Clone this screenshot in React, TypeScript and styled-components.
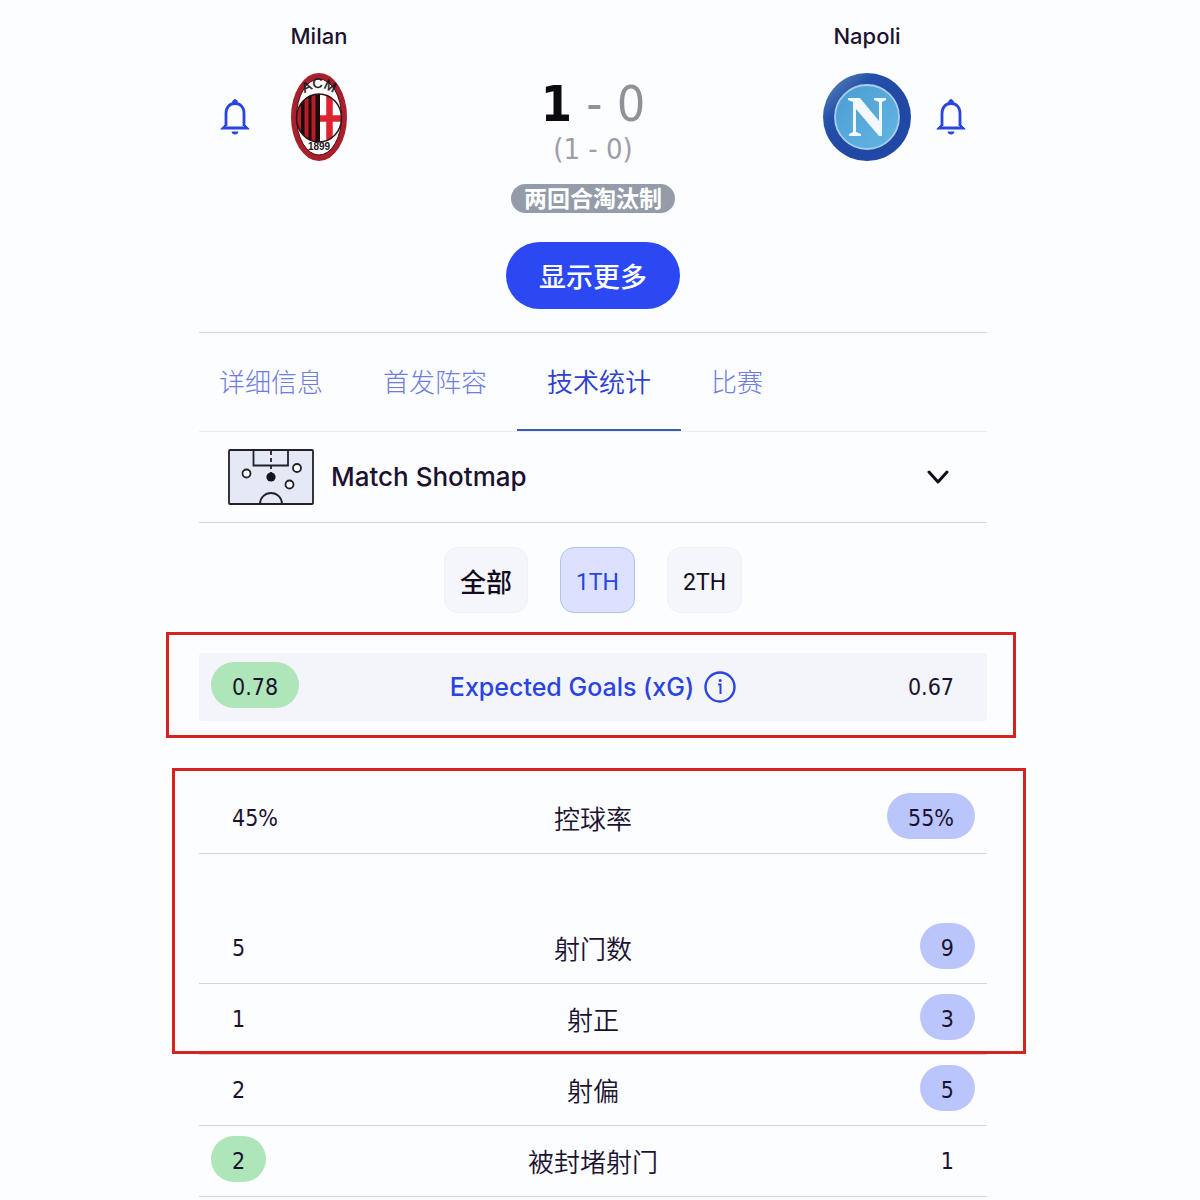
import React from "react";
import styled, { createGlobalStyle } from "styled-components";

const latin = `Inter, "Noto Sans CJK SC", sans-serif`;
const digits = `"DejaVu Sans Condensed", "DejaVu Sans", "Noto Sans CJK SC", sans-serif`;
const cjk = `"Noto Sans CJK SC", sans-serif`;

const ink = "#1b1230";
const blue = "#2a44e0";
const line = "#cfd8e2";

const GlobalStyle = createGlobalStyle`
  *, *::before, *::after { box-sizing: border-box; }
  body { margin: 0; background: #fcfdff; color: ${ink}; font-family: ${latin}; }
  button { margin: 0; padding: 0; border: 0; background: none; color: inherit; cursor: pointer; }
  svg { display: block; flex: none; }
`;

const Page = styled.main`
  padding: 24px 213px 0 199px;
`;

const Header = styled.header`
  display: flex;
  justify-content: space-between;
  align-items: flex-start;
  padding: 0 21px 23px;
  border-bottom: 1px solid ${line};
`;

const Team = styled.section<{ $away?: boolean }>`
  display: grid;
  grid-template-columns: ${(p) => (p.$away ? "88px 30px" : "30px 88px")};
  grid-template-areas: ${(p) => (p.$away ? `"name ." "crest bell"` : `". name" "bell crest"`)};
  gap: 25px;
  justify-items: center;
  align-items: center;
`;

const TeamName = styled.h2`
  grid-area: name;
  margin: 0;
  font: 500 22px/24px ${latin};
`;

const Crest = styled.div`
  grid-area: crest;
`;

const BellButton = styled.button`
  grid-area: bell;
`;

const Score = styled.section`
  display: flex;
  flex-direction: column;
  align-items: center;
  padding-top: 54px;
`;

const Total = styled.p`
  margin: 0;
  font: 400 50px/52px ${digits};
  color: #909297;
  white-space: pre;

  strong {
    font-weight: 700;
    color: #0d0b12;
  }
`;

const HalfTime = styled.p`
  margin: 0;
  padding-top: 2px;
  font: 400 29px/34px ${digits};
  color: #a09ba8;
`;

const Badge = styled.span`
  height: 29px;
  margin-top: 18px;
  padding: 0 13px;
  border-radius: 15px;
  background: #959ca9;
  color: #fff;
  font: 700 23px/26px ${cjk};
`;

const MoreButton = styled.button`
  && {
    height: 67px;
    margin-top: 29px;
    padding: 0 33px;
    border-radius: 34px;
    background: #2b48f2;
    color: #fff;
    font: 500 27px/64px ${cjk};
  }
`;

const Tabs = styled.nav`
  display: flex;
  border-bottom: 1px solid #e9eef3;
`;

const TabList = styled.div`
  display: flex;
  margin: 0 -10px;
`;

const Tab = styled.button<{ $active?: boolean }>`
  && {
    padding: 0 30px;
    border-bottom: 2px solid ${(p) => (p.$active ? "#3f5bb4" : "transparent")};
    color: ${(p) => (p.$active ? "#2f3fd0" : "#6f7ce0")};
    font: ${(p) => (p.$active ? 350 : 300)} 26px/96px ${cjk};
  }
`;

const ShotmapRow = styled.button`
  && {
    display: flex;
    align-items: center;
    gap: 17px;
    width: 100%;
    height: 91px;
    padding: 0 38px 0 29px;
    border-bottom: 1px solid ${line};
    font: 500 26px/32px ${latin};
  }

  span {
    flex: 1;
    text-align: left;
  }
`;

const Filters = styled.div`
  display: flex;
  justify-content: center;
  gap: 32px;
  padding: 24px 0 40px;
`;

const Filter = styled.button<{ $active?: boolean }>`
  && {
    height: 66px;
    padding: 5px 15px 0;
    border: 1px solid ${(p) => (p.$active ? "#b4c2ee" : "#eef1f7")};
    border-radius: 14px;
    background: ${(p) => (p.$active ? "#dbe1ff" : "#f5f6fb")};
    color: ${(p) => (p.$active ? blue : "#120c20")};
    font: 400 23px/32px Roboto, ${cjk};
  }
`;

const FilterCjk = styled.span`
  font: 500 26px/32px ${cjk};
`;

const Stats = styled.table`
  display: block;
`;

const Group = styled.tbody<{ $frame?: string; $apart?: boolean }>`
  display: block;
  position: relative;
  margin-top: ${(p) => (p.$apart ? "62px" : "0")};

  &::after {
    content: "";
    display: ${(p) => (p.$frame ? "block" : "none")};
    position: absolute;
    inset: ${(p) => p.$frame};
    border: 3px solid #d62320;
    pointer-events: none;
  }
`;

const Row = styled.tr<{ $shaded?: boolean; $spaced?: boolean }>`
  display: grid;
  grid-template-columns: 1fr auto 1fr;
  align-items: center;
  height: ${(p) => (p.$shaded ? "68px" : "71px")};
  margin-top: ${(p) => (p.$spaced ? "59px" : "0")};
  padding: ${(p) => (p.$shaded ? "0 12px 4px" : "0 12px 5px")};
  border-bottom: ${(p) => (p.$shaded ? "0" : `1px solid ${line}`)};
  border-radius: ${(p) => (p.$shaded ? "3px" : "0")};
  background: ${(p) => (p.$shaded ? "#f3f5fa" : "transparent")};
`;

const Cell = styled.td`
  padding: 0;

  &:last-child {
    text-align: right;
  }
`;

const Value = styled.span<{ $tone?: "green" | "blue" }>`
  display: inline-block;
  height: 46px;
  padding: 4px 21px 0;
  border-radius: 23px;
  background: ${(p) => (p.$tone === "green" ? "#aee5b9" : p.$tone === "blue" ? "#bac6fb" : "transparent")};
  font: 400 23px/42px ${digits};
  vertical-align: middle;
`;

const Label = styled.th<{ $link?: boolean }>`
  display: flex;
  align-items: center;
  gap: 10px;
  padding: 4px 0 0;
  color: ${(p) => (p.$link ? blue : ink)};
  font: ${(p) => (p.$link ? `500 25px/32px ${latin}` : `350 26px/36px ${cjk}`)};
`;

const InfoButton = styled.button``;

function Bell() {
  return (
    <svg width="30" height="38" viewBox="0 0 30 38" fill="none" stroke={blue}>
      <path d="M6 28V15.500C6 9.500 9.500 5.500 15 5.500s9 4 9 10V28" strokeWidth="2.800" />
      <path d="M12 5.500 13.200 2.500Q15 .5 16.800 2.500L18 5.500Z" fill={blue} strokeWidth="1" />
      <path d="M5.500 26.500 .8 31H29.200L24.500 26.500V29H5.500Z" fill={blue} strokeWidth="1" strokeLinejoin="round" />
      <path d="M11.500 33.500h7q-.5 3-3.500 3t-3.500-3Z" fill={blue} stroke="none" />
    </svg>
  );
}

function MilanCrest() {
  return (
    <svg width="56" height="88" viewBox="0 0 56 88" role="img" aria-label="Milan">
      <defs>
        <clipPath id="milan-shield">
          <ellipse cx="28" cy="45" rx="22.500" ry="24" />
        </clipPath>
        <path id="milan-arc" d="M7 26Q28 4 49 26" />
      </defs>
      <ellipse cx="28" cy="44" rx="28" ry="44" fill="#a8202b" />
      <ellipse cx="28" cy="44" rx="22.500" ry="38" fill="#fff" stroke="#4d1016" strokeWidth="1" />
      <g clipPath="url(#milan-shield)">
        <rect x="4" y="20" width="25" height="50" fill="#1a080b" />
        <path d="M8 20v50M15.500 20v50M22.500 20v50" stroke="#b51d27" strokeWidth="4" />
        <rect x="29" y="20" width="24" height="50" fill="#fff" />
        <path d="M38.500 20v50M29 45.500h24" stroke="#dc2430" strokeWidth="6.500" />
      </g>
      <ellipse cx="28" cy="45" rx="22.500" ry="24" fill="none" stroke="#2a1417" strokeWidth="1.500" />
      <text fontFamily="Liberation Sans, sans-serif" fontSize="14" fill="#20181c" stroke="#20181c" strokeWidth=".4" textAnchor="middle">
        <textPath href="#milan-arc" startOffset="50%">ACM</textPath>
      </text>
      <text x="28" y="77" fontFamily="Liberation Sans, sans-serif" fontWeight="700" fontSize="10" fill="#20181c" textAnchor="middle">1899</text>
    </svg>
  );
}

function NapoliCrest() {
  return (
    <svg width="88" height="88" viewBox="0 0 88 88" role="img" aria-label="Napoli">
      <defs>
        <linearGradient id="napoli-ring" x1="0" y1="0" x2=".6" y2=".6">
          <stop offset="0" stopColor="#2448a0" />
          <stop offset=".22" stopColor="#4a74b4" />
          <stop offset=".5" stopColor="#2350a8" />
          <stop offset="1" stopColor="#2148a4" />
        </linearGradient>
        <linearGradient id="napoli-sky" x1="0" y1="0" x2="1" y2="1">
          <stop offset="0" stopColor="#4b9dd3" />
          <stop offset="1" stopColor="#63b6e2" />
        </linearGradient>
      </defs>
      <circle cx="44" cy="44" r="44" fill="url(#napoli-ring)" />
      <circle cx="44" cy="44" r="32" fill="url(#napoli-sky)" stroke="#a9cdee" strokeWidth="1.800" />
      <path
        d="M25 25H37L56 48V29L51 27V25H63V27L59 29V63H56L33 36V59L38 61V63H26V61L30 59V29L25 27Z"
        fill="#f3f8ff"
      />
    </svg>
  );
}

function PitchIcon() {
  return (
    <svg width="86" height="56" viewBox="0 0 86 56" fill="none" stroke="#23202b" strokeWidth="1.800">
      <rect x="1" y="1" width="84" height="54" rx="1" fill="#e5e8f5" />
      <path d="M25.500 1V16.500H60V1" />
      <path d="M43 2v22" strokeDasharray="4 3" />
      <circle cx="43" cy="28" r="4.600" fill="#17131d" stroke="none" />
      <circle cx="18.500" cy="24.500" r="4" fill="#fff" />
      <circle cx="69" cy="19" r="4" fill="#fff" />
      <circle cx="61.500" cy="35.500" r="4" fill="#fff" />
      <path d="M32 55a11 11 0 0 1 22 0" />
    </svg>
  );
}

function Chevron() {
  return (
    <svg width="22" height="14" viewBox="0 0 22 14" fill="none" stroke="#120e1a" strokeWidth="3" strokeLinecap="round" strokeLinejoin="round">
      <path d="M2 2l9 10 9-10" />
    </svg>
  );
}

function Info() {
  return (
    <svg width="32" height="32" viewBox="0 0 32 32" fill="none" stroke={blue}>
      <circle cx="16" cy="16" r="14.500" strokeWidth="2.400" />
      <path d="M14 13.500h2.500v9.500" strokeWidth="2" />
      <circle cx="16.200" cy="9.500" r="1.500" fill={blue} stroke="none" />
    </svg>
  );
}

type Stat = { label: string; home: string; away: string; lead?: "home" | "away"; shaded?: boolean; spaced?: boolean };

const expected: Stat[] = [{ label: "Expected Goals (xG)", home: "0.78", away: "0.67", lead: "home", shaded: true }];
const main: Stat[] = [
  { label: "控球率", home: "45%", away: "55%", lead: "away" },
  { label: "射门数", home: "5", away: "9", lead: "away", spaced: true },
  { label: "射正", home: "1", away: "3", lead: "away" },
];
const rest: Stat[] = [
  { label: "射偏", home: "2", away: "5", lead: "away" },
  { label: "被封堵射门", home: "2", away: "1", lead: "home" },
];

function StatRow({ stat }: { stat: Stat }) {
  return (
    <Row $shaded={stat.shaded} $spaced={stat.spaced}>
      <Cell>
        <Value $tone={stat.lead === "home" ? "green" : undefined}>{stat.home}</Value>
      </Cell>
      <Label scope="row" $link={stat.shaded}>
        {stat.label}
        {stat.shaded && (
          <InfoButton type="button" aria-label="Info">
            <Info />
          </InfoButton>
        )}
      </Label>
      <Cell>
        <Value $tone={stat.lead === "away" ? "blue" : undefined}>{stat.away}</Value>
      </Cell>
    </Row>
  );
}

const tabs = ["详细信息", "首发阵容", "技术统计", "比赛"];

export default function App() {
  const [tab, setTab] = React.useState("技术统计");
  const [half, setHalf] = React.useState("1TH");

  return (
    <>
      <GlobalStyle />
      <Page>
        <Header>
          <Team>
            <TeamName>Milan</TeamName>
            <BellButton type="button" aria-label="Milan alerts">
              <Bell />
            </BellButton>
            <Crest>
              <MilanCrest />
            </Crest>
          </Team>
          <Score>
            <Total>
              <strong>1</strong> - 0
            </Total>
            <HalfTime>(1 - 0)</HalfTime>
            <Badge>两回合淘汰制</Badge>
            <MoreButton type="button">显示更多</MoreButton>
          </Score>
          <Team $away>
            <TeamName>Napoli</TeamName>
            <Crest>
              <NapoliCrest />
            </Crest>
            <BellButton type="button" aria-label="Napoli alerts">
              <Bell />
            </BellButton>
          </Team>
        </Header>

        <Tabs>
          <TabList role="tablist">
            {tabs.map((name) => (
              <Tab key={name} type="button" role="tab" aria-selected={tab === name} $active={tab === name} onClick={() => setTab(name)}>
                {name}
              </Tab>
            ))}
          </TabList>
        </Tabs>

        <ShotmapRow type="button" aria-expanded={false}>
          <PitchIcon />
          <span>Match Shotmap</span>
          <Chevron />
        </ShotmapRow>

        <Filters>
          {["全部", "1TH", "2TH"].map((name) => (
            <Filter key={name} type="button" aria-pressed={half === name} $active={half === name} onClick={() => setHalf(name)}>
              {name === "全部" ? <FilterCjk>{name}</FilterCjk> : name}
            </Filter>
          ))}
        </Filters>

        <Stats>
          <Group $frame="-21px -29px -17px -33px">
            {expected.map((stat) => (
              <StatRow key={stat.label} stat={stat} />
            ))}
          </Group>
          <Group $apart $frame="-15px -39px 1px -27px">
            {main.map((stat) => (
              <StatRow key={stat.label} stat={stat} />
            ))}
          </Group>
          <Group>
            {rest.map((stat) => (
              <StatRow key={stat.label} stat={stat} />
            ))}
          </Group>
        </Stats>
      </Page>
    </>
  );
}
